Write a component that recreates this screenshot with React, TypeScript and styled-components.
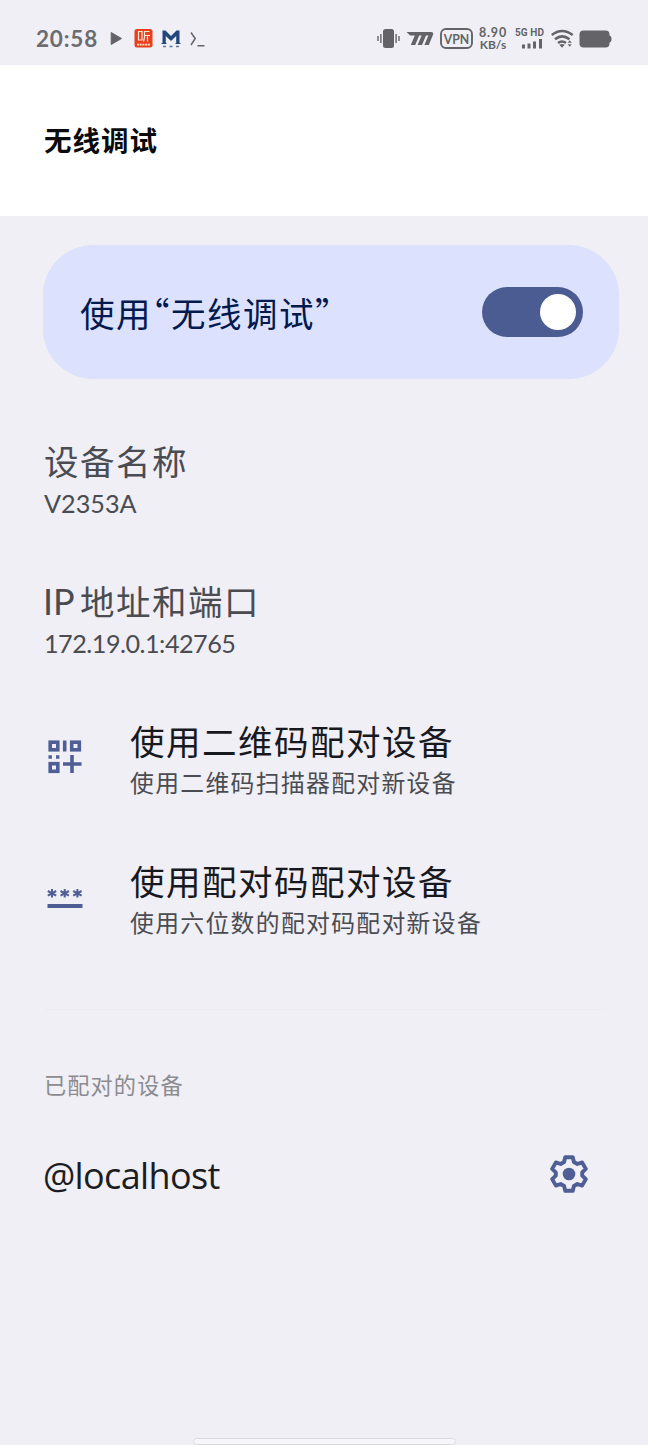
import React from "react";
import styled, { createGlobalStyle } from "styled-components";

const GlobalStyle = createGlobalStyle`
  body { margin: 0; background: #efeff5; }
  * { box-sizing: border-box; }
`;

const cjk = `"Noto Sans CJK SC", sans-serif`;

const Screen = styled.div`
  width: 648px;
  height: 1445px;
  display: flex;
  flex-direction: column;
  background: #efeff5;
  font-family: ${cjk};
  overflow: hidden;
  white-space: nowrap;
`;

const StatusBar = styled.div`
  height: 65px;
  flex: none;
  padding: 12px 36px 0 36px;
  display: flex;
  justify-content: space-between;
`;

const StatusGroup = styled.div`
  height: 53px;
  display: flex;
  align-items: flex-start;
`;

const Clock = styled.span`
  width: 74px;
  font: 700 22.5px/53px Lato, sans-serif;
  letter-spacing: 0.8px;
  color: #6c6c70;
`;

const StatusIcon = styled.svg<{ $gap?: number }>`
  height: 53px;
  flex: none;
  margin-left: ${(p) => p.$gap ?? 0}px;
`;

const Speed = styled.div`
  width: 30px;
  margin: 15px 0 0 4px;
  display: flex;
  flex-direction: column;
  align-items: center;
  font: 700 12px/11px Lato, sans-serif;
  color: #646468;
`;

const SpeedValue = styled.span`
  font-size: 12.5px;
  line-height: 12px;
  letter-spacing: 0.8px;
`;

const Cell = styled.div`
  width: 30px;
  margin: 15px 0 0 6px;
  display: flex;
  flex-direction: column;
  align-items: flex-end;
  font: 700 10px/11px Roboto, sans-serif;
  letter-spacing: 0.1px;
  color: #646468;
`;

const Header = styled.header`
  height: 151px;
  flex: none;
  padding-left: 44px;
  background: #fff;
`;

const PageTitle = styled.h1`
  margin: 0;
  font: 700 27.5px/149px ${cjk};
  letter-spacing: 1px;
  color: #0b0b0d;
`;

const SwitchCard = styled.section`
  width: 576px;
  height: 134px;
  flex: none;
  margin: 29px 0 34px 43px;
  padding: 0 36px 0 37px;
  border-radius: 50px;
  background: #dce2fd;
  display: flex;
  align-items: center;
  justify-content: space-between;
`;

const SwitchLabel = styled.span`
  padding-bottom: 1px;
  font-size: 34.5px;
  letter-spacing: 1.5px;
  line-height: 50px;
  color: #04194e;
`;

const OpenQuote = styled.span`
  margin-left: -17px;
`;

const Track = styled.span`
  width: 101px;
  height: 50px;
  padding: 0 7px;
  border-radius: 25px;
  background: #4b5c92;
  display: flex;
  align-items: center;
  justify-content: flex-end;
`;

const Thumb = styled.span`
  width: 36px;
  height: 36px;
  border-radius: 50%;
  background: #fff;
`;

const Item = styled.div`
  height: 140px;
  flex: none;
  padding: 25px 0 0 44px;
  display: flex;
`;

const ItemIcon = styled.svg`
  width: 42px;
  height: 42px;
  flex: none;
  margin: 18px 44px 0 0;
`;

const ItemText = styled.div`
  display: flex;
  flex-direction: column;
`;

const ItemTitle = styled.span<{ $muted?: boolean }>`
  height: 45px;
  font-size: 34.5px;
  line-height: 44px;
  letter-spacing: 1.5px;
  color: ${(p) => (p.$muted ? "#4b4c52" : "#18191f")};
`;

const LatinWord = styled.span`
  display: inline-block;
  width: 36px;
  font-family: Lato, sans-serif;
  font-size: 36px;
  line-height: 1;
  letter-spacing: 0;
  text-indent: -1px;
`;

const ItemNote = styled.span<{ $latin?: boolean; $spacing?: number }>`
  padding-top: ${(p) => (p.$latin ? 2 : 0)}px;
  font-family: ${(p) => (p.$latin ? "Lato, sans-serif" : cjk)};
  font-size: ${(p) => (p.$latin ? 25.2 : 23.8)}px;
  line-height: 37px;
  letter-spacing: ${(p) => p.$spacing ?? 1.35}px;
  color: #4b4c52;
`;

const Divider = styled.hr`
  width: 562px;
  height: 1px;
  flex: none;
  margin: 36px 0 0 44px;
  border: 0;
  background: #ebebf1;
`;

const SectionLabel = styled.h2`
  margin: 54px 0 0 44px;
  font: 400 22.2px/40px ${cjk};
  letter-spacing: 1.1px;
  color: #8b8b90;
`;

const DeviceRow = styled.div`
  height: 60px;
  margin: 40px 60px 0 43px;
  display: flex;
  align-items: center;
  justify-content: space-between;
`;

const DeviceName = styled.span`
  padding-top: 4px;
  font: 400 36px/60px "Open Sans", sans-serif;
  letter-spacing: -0.65px;
  color: #1c1d22;
`;

const HomeIndicator = styled.div`
  width: 263px;
  height: 7px;
  flex: none;
  margin: auto 0 0 193px;
  border: 1px solid #dadade;
  border-radius: 4px;
  background: #f6f6fb;
`;

const grey = "#646468";
const indigo = "#4f5f95";

const AppTile = () => (
  <StatusIcon width="19" viewBox="0 0 19 53" $gap={12}>
    <rect x="0.5" y="17" width="18" height="18.5" rx="2.5" fill="#e8401c" />
    <g fill="none" stroke="#ffe3d5" strokeWidth="1.2">
      <path d="M4.5 19.5h3.5v8.5h-3.5zM15.5 19.5H10.5v6l-1 4M10.500 23.500h5.500M13.500 23.500v6" />
      <path d="M3 32.700h13" strokeDasharray="2 .7" strokeWidth="1.800" />
    </g>
  </StatusIcon>
);

const Asterisk = ({ x }: { x: number }) => (
  <path d={`M${x} 13v8.600M${x - 4.2} 15l8.400 4.600M${x + 4.2} 15l-8.400 4.600`} />
);

export default function App() {
  return (
    <>
      <GlobalStyle />
      <Screen>
        <StatusBar>
          <StatusGroup>
            <Clock>20:58</Clock>
            <StatusIcon width="12" viewBox="0 0 12 53">
              <path d="M1.200 20.500 11.500 26.500 1.200 32.500z" fill={grey} stroke={grey} strokeLinejoin="round" />
            </StatusIcon>
            <AppTile />
            <StatusIcon width="20" viewBox="0 0 20 53" $gap={8}>
              <path d="M1.500 18.500h3L10 24l5.500-5.500h3V31h1v1h-5v-1h.7v-7L10 29 4.800 24v7h.7v1h-5v-1h1z" fill="#23477c" />
              <path d="M2 34.500h3M8.500 34.500h3M15 34.500h3" stroke="#5a789f" strokeWidth="1.300" />
            </StatusIcon>
            <StatusIcon width="17" viewBox="0 0 17 53" $gap={8}>
              <path d="M2 20.500 6.200 26.500 2 33M8.500 33.700h7" fill="none" stroke={grey} strokeWidth="1.500" />
            </StatusIcon>
          </StatusGroup>
          <StatusGroup>
            <StatusIcon width="23" viewBox="0 0 23 53">
              <rect x="6" y="17" width="11" height="19" rx="2.500" fill={grey} />
              <path d="M1 24v5M3.900 22v9M22 24v5M19.100 22v9" stroke={grey} strokeWidth="1.400" />
            </StatusIcon>
            <StatusIcon width="28" viewBox="0 0 28 53" $gap={6}>
              <path
                d="M.5 20H25q3 0 2 2.800L22.800 33h-4.400l4-9.500H20L16 33h-4.400l4-9.500h-2.400L9.200 33H4.800l4-9.500H4Q2.500 21.500.5 20z"
                fill={grey}
              />
            </StatusIcon>
            <StatusIcon width="34" viewBox="0 0 34 53" $gap={6}>
              <rect x="1" y="17" width="31" height="19" rx="5" fill="none" stroke={grey} strokeWidth="1.900" />
              <text
                x="16.500"
                y="31.500"
                textAnchor="middle"
                textLength="25.500"
                lengthAdjust="spacingAndGlyphs"
                fontFamily="Lato, sans-serif"
                fontSize="14"
                fontWeight="700"
                fill={grey}
              >
                VPN
              </text>
            </StatusIcon>
            <Speed>
              <SpeedValue>8.90</SpeedValue>
              <span>KB/s</span>
            </Speed>
            <Cell>
              5G HD
              <svg width="24" height="11" viewBox="0 0 24 11">
                <path
                  d="M3.500 6.500v4M9 5.500v5M14.500 3.500v7M20.500 1v9.500"
                  stroke={grey}
                  strokeWidth="3"
                />
              </svg>
            </Cell>
            <StatusIcon width="23" viewBox="0 0 23 53" $gap={7}>
              <g fill="none" stroke={grey} strokeWidth="2.600">
                <path d="M.8 23Q11 15 21.700 23M4 27.200Q11 21.500 18.500 27.200M7 31Q11 28 15 31" />
              </g>
              <path d="M8.300 32.800q2.700-1.500 5.400 0L11 35.800zM16.700 30.800l2-2.500 2 2.500zM16.700 32.300l2 2.500 2-2.500z" fill={grey} />
            </StatusIcon>
            <StatusIcon width="33" viewBox="0 0 33 53" $gap={5}>
              <rect x="0.500" y="18.500" width="30" height="17" rx="4" fill={grey} />
              <path d="M30 23.500q2.500 0 2.500 3.500T30 30.500z" fill={grey} />
            </StatusIcon>
          </StatusGroup>
        </StatusBar>

        <Header>
          <PageTitle>无线调试</PageTitle>
        </Header>

        <SwitchCard>
          <SwitchLabel>
            使用<OpenQuote>“</OpenQuote>无线调试”
          </SwitchLabel>
          <Track>
            <Thumb />
          </Track>
        </SwitchCard>

        <Item>
          <ItemText>
            <ItemTitle $muted>设备名称</ItemTitle>
            <ItemNote $latin $spacing={0}>V2353A</ItemNote>
          </ItemText>
        </Item>
        <Item>
          <ItemText>
            <ItemTitle $muted>
              <LatinWord>IP </LatinWord>地址和端口
            </ItemTitle>
            <ItemNote $latin $spacing={-0.5}>172.19.0.1:42765</ItemNote>
          </ItemText>
        </Item>
        <Item>
          <ItemIcon viewBox="0 0 42 42">
            <g fill="none" stroke={indigo} strokeWidth="3.600">
              <rect x="6.200" y="6.200" width="7.600" height="7.600" />
              <rect x="27.700" y="6.200" width="7.600" height="7.600" />
              <rect x="6.200" y="27.700" width="7.600" height="7.600" />
              <path d="M20.700 4.500v11M28 19v18M19 28h18.500" />
              <path d="M4.500 21h3.400M12 21h3.400" />
            </g>
          </ItemIcon>
          <ItemText>
            <ItemTitle>使用二维码配对设备</ItemTitle>
            <ItemNote>使用二维码扫描器配对新设备</ItemNote>
          </ItemText>
        </Item>
        <Item>
          <ItemIcon viewBox="0 0 42 42">
            <g stroke={indigo} strokeWidth="2" fill="none">
              <Asterisk x={8} />
              <Asterisk x={20.7} />
              <Asterisk x={33.4} />
              <path d="M3.500 30h35" strokeWidth="3.800" />
            </g>
          </ItemIcon>
          <ItemText>
            <ItemTitle>使用配对码配对设备</ItemTitle>
            <ItemNote>使用六位数的配对码配对新设备</ItemNote>
          </ItemText>
        </Item>

        <Divider />
        <SectionLabel>已配对的设备</SectionLabel>
        <DeviceRow>
          <DeviceName>@localhost</DeviceName>
          <svg width="38" height="38" viewBox="0 0 38 38">
            <path
              d="M15.200 2.200h7.600l1.100 4.800 3.500 2 4.700-1.600 3.700 6.500-3.600 3.400v3.400l3.600 3.400-3.700 6.500-4.700-1.600-3.500 2-1.100 4.800h-7.600l-1.100-4.800-3.500-2-4.700 1.600L2.200 24.100l3.600-3.400v-3.400L2.200 13.900l3.700-6.500L10.600 9l3.500-2z"
              fill="none"
              stroke={indigo}
              strokeWidth="3.900"
              strokeLinejoin="round"
            />
            <circle cx="19" cy="19" r="6.300" fill={indigo} />
          </svg>
        </DeviceRow>
        <HomeIndicator />
      </Screen>
    </>
  );
}
